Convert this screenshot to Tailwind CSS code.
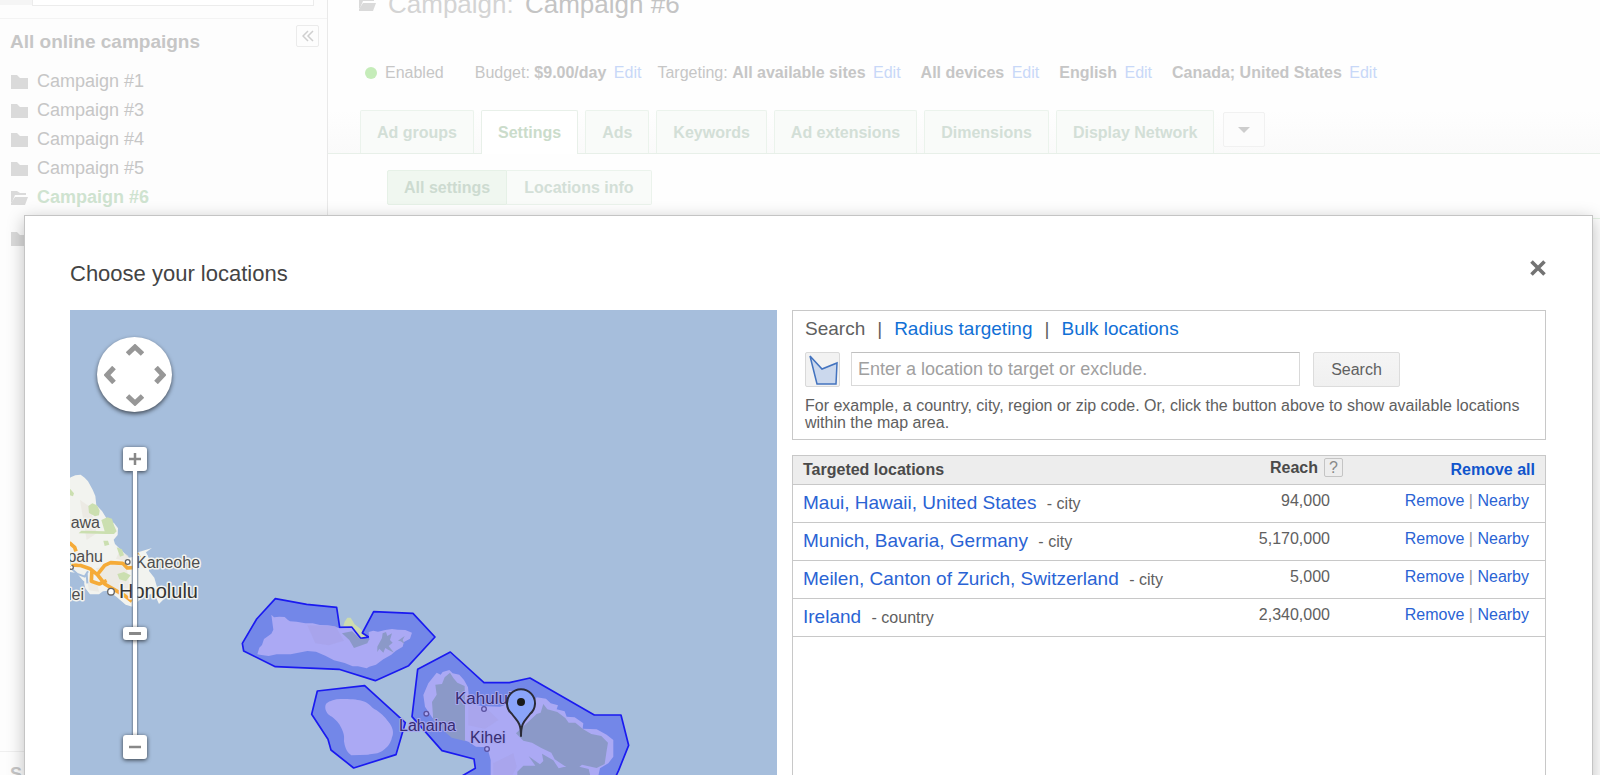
<!DOCTYPE html>
<html lang="en">
<head>
    <meta charset="UTF-8">
    <meta name="viewport" content="width=device-width, initial-scale=1.0">
    <title>Campaign #6</title>
    <script src="https://cdn.jsdelivr.net/npm/@tailwindcss/browser@4"></script>
</head>
<body class="relative h-screen overflow-hidden bg-white font-['Liberation_Sans',Arial,sans-serif] text-base leading-5 text-[#c6c6c6]">

    <!-- icons -->
    <svg class="hidden">
        <symbol id="folder" viewBox="0 0 17 14"><path fill="#dadada" d="M0 0h6l3 3h8v11H0z"/></symbol>
        <symbol id="folder-open" viewBox="0 0 17 14"><path fill="#dadada" d="M0 0h6l3 2h6v2H4L1 11H0z"/><path fill="#dadada" d="M4 6h13l-3 8H0v-2z"/></symbol>
    </svg>

    <div class="flex min-h-full">
        <aside class="flex h-screen w-[328px] shrink-0 flex-col border-r border-[#e9e9e9] bg-[#fdfdfd]">
            <div class="flex h-[19px] items-start border-b border-[#f3f3f3]">
                <div class="h-[5px] w-8 bg-[#f5f5f5]"></div>
                <div class="h-[6px] w-[282px] border border-t-0 border-[#ececec] bg-white"></div>
            </div>
            <div class="flex items-start justify-between pt-[6px] pr-2 pl-[10px]">
                <h2 class="pt-[7px] text-[19px] font-bold">All online campaigns</h2>
                <button class="flex h-[22px] w-[23px] items-center justify-center rounded-xs border border-[#ebebeb]" aria-label="Collapse">
                    <svg class="h-3 w-3" viewBox="0 0 12 12" fill="none" stroke="#cfcfcf" stroke-width="1.5"><path d="M6 1L1 6l5 5M11 1L6 6l5 5"/></svg>
                </button>
            </div>
            <ul class="mt-[15px] pl-[11px] text-lg/[29px]">
                <li><a href="#" class="flex items-center gap-[9px]"><svg class="h-[14px] w-[17px]"><use href="#folder"/></svg>Campaign #1</a></li>
                <li><a href="#" class="flex items-center gap-[9px]"><svg class="h-[14px] w-[17px]"><use href="#folder"/></svg>Campaign #3</a></li>
                <li><a href="#" class="flex items-center gap-[9px]"><svg class="h-[14px] w-[17px]"><use href="#folder"/></svg>Campaign #4</a></li>
                <li><a href="#" class="flex items-center gap-[9px]"><svg class="h-[14px] w-[17px]"><use href="#folder"/></svg>Campaign #5</a></li>
                <li><a href="#" class="flex items-center gap-[9px] font-bold text-[#cfe3d0]"><svg class="h-[14px] w-[17px]"><use href="#folder-open"/></svg>Campaign #6</a></li>
                <li class="mt-5"><svg class="h-[14px] w-[17px]"><use href="#folder"/></svg></li>
            </ul>
            <div class="mt-auto h-6 border-t border-[#efefef] pt-3 pl-[10px] text-lg/5 font-bold">S</div>
        </aside>

        <main class="flex min-w-0 grow flex-col bg-[#fefefe]">
            <h1 class="flex h-[19px] items-end gap-3 pl-[31px] text-[26px] leading-[30px] text-[#d4d4d4]">
                <svg class="mb-2 h-[14px] w-[17px] shrink-0"><use href="#folder-open"/></svg>
                <span class="whitespace-nowrap">Campaign: <span class="ml-1 text-[#c4c4c4]">Campaign #6</span></span>
            </h1>
            <div class="mt-11 flex items-center gap-5 pl-[37px] whitespace-nowrap">
                <span class="mr-[11px] flex items-center gap-2"><span class="h-3 w-3 rounded-full bg-[#c5ecb9]"></span>Enabled</span>
                <span class="-mr-1">Budget: <b>$9.00/day</b> <a href="#" class="ml-[3px] text-[#c8d8f8]">Edit</a></span>
                <span>Targeting: <b>All available sites</b> <a href="#" class="ml-[3px] text-[#c8d8f8]">Edit</a></span>
                <span><b>All devices</b> <a href="#" class="ml-[3px] text-[#c8d8f8]">Edit</a></span>
                <span><b>English</b> <a href="#" class="ml-[3px] text-[#c8d8f8]">Edit</a></span>
                <span><b>Canada; United States</b> <a href="#" class="ml-[3px] text-[#c8d8f8]">Edit</a></span>
            </div>
            <nav class="mt-[27px] flex items-end gap-[7px] border-b border-[#e8f0e9] bg-linear-to-b from-[#fefefe] to-[#fafafa] pl-8 font-bold whitespace-nowrap text-[#d3dfd7]">
                <a href="#" class="h-[43px] rounded-t-xs border border-b-0 border-[#ebf3ec] bg-[#f9fbf9] px-4 pt-3">Ad groups</a>
                <a href="#" class="-mb-px h-11 rounded-t-xs border border-b-0 border-[#e8f0e9] bg-white px-4 pt-3 text-[#cbdccb]">Settings</a>
                <a href="#" class="h-[43px] rounded-t-xs border border-b-0 border-[#ebf3ec] bg-[#f9fbf9] px-4 pt-3">Ads</a>
                <a href="#" class="h-[43px] rounded-t-xs border border-b-0 border-[#ebf3ec] bg-[#f9fbf9] px-4 pt-3">Keywords</a>
                <a href="#" class="h-[43px] rounded-t-xs border border-b-0 border-[#ebf3ec] bg-[#f9fbf9] px-4 pt-3">Ad extensions</a>
                <a href="#" class="h-[43px] rounded-t-xs border border-b-0 border-[#ebf3ec] bg-[#f9fbf9] px-4 pt-3">Dimensions</a>
                <a href="#" class="h-[43px] rounded-t-xs border border-b-0 border-[#ebf3ec] bg-[#f9fbf9] px-4 pt-3">Display Network</a>
                <button class="mb-[6px] ml-[2px] flex h-[35px] w-[42px] items-center justify-center rounded-xs border border-[#f1f1f1] bg-[#fcfcfc]" aria-label="More tabs">
                    <svg class="h-[6px] w-3" viewBox="0 0 12 6"><path fill="#cdcdcd" d="M0 0h12L6 6z"/></svg>
                </button>
            </nav>
            <div class="flex border-b border-[#e6f3e6] pt-4 pb-[13px] pl-[59px] font-bold text-[#d3dfd7]">
                <a href="#" class="h-[35px] rounded-l-xs border border-[#e6f1e7] bg-[#f0f7f0] px-4 pt-[7px] text-[#cddbd0]">All settings</a>
                <a href="#" class="h-[35px] rounded-r-xs border border-l-0 border-[#ebf3ec] bg-[#f9fbf9] px-[17px] pt-[7px]">Locations info</a>
            </div>
        </main>
    </div>

    <!-- location picker -->
    <div role="dialog" aria-labelledby="dialog-title" class="absolute top-[215px] right-[7px] left-6 border border-[#c4c4c4] bg-white pt-11 pr-[46px] pb-11 pl-[45px] text-[#606060] shadow-[0_4px_16px_rgba(0,0,0,0.25)]">
        <div class="mb-[22px] flex items-start justify-between">
            <h2 id="dialog-title" class="text-[22px]/[28px] text-[#444]">Choose your locations</h2>
            <button class="p-0" aria-label="Close">
                <svg class="h-4 w-4" viewBox="0 0 16 16" stroke="#737373" stroke-width="3.6"><path d="M1.500 1.500l13 13M14.500 1.500l-13 13"/></svg>
            </button>
        </div>

        <div class="flex gap-[15px]">
            <div class="relative flex-[707] overflow-hidden bg-[#a6bedc]">
                <svg class="block w-full" viewBox="70 310 707 600" font-size="16">
                    <!-- Oahu -->
                    <g transform="translate(60 430) scale(.3333)">
                        <path fill="#f2f3ef" d="M20 150l14-9 12-5 16-2 12 9 10 11 14 25 8 19 3 28 17 17 16 26 20 10 12 16-1 20-12 14 4 13 19 19 23 22 12-2 10-13 20-6 27-8-18 13 9 18 0 38 16 20 10 35 19 4 3 22-18 18-7-16-15-14-18 4-14 10-26 24-20-6-28-24-26-18-14 2-12 9-27 0-14-18-6-22-20-24-29-4z"/>
                        <path fill="#e8e4dc" d="M108 415l60-12 32 10 10 60-10 30-30-10-42-40zM82 455l30 8 5 22-30-4zM180 360l26 18-8 16-30-8zM60 210l30 20 20 80-30 20z" opacity=".6"/>
                        <path fill="#cbdfb0" d="M85 228l12-8 14 6 8 16-2 14-12 3-18-10zM124 270l18-8 14 4 6 20 8 18-8 8h-24l-82-2 8-8 70 2zM30 176l12 14-3 9-9-3zM170 352l16 6 6 18-12 4zM172 432l20-6 20 10-14 18-20-6zM130 332l14 0 4 12-14 4z"/>
                        <path fill="none" stroke="#a6bedc" stroke-width="6" d="M28 410l24 22 22 8 10-16M40 438l30 18-2 26M80 430l2 30"/>
                        <path fill="none" stroke="#f5ab38" stroke-width="11" stroke-linejoin="round" d="M28 338l16 14 4 12M28 405l32 1 30 10 22 18 22-28 18-8 36 2 14 14 26-2M96 418l-2 36 24 8 22-10M112 434l22 28 34 20 22 12 26 20M230 370l8 14"/>
                        <g fill="#fff" stroke="#666" stroke-width="4"><circle cx="203" cy="396" r="7"/><circle cx="153" cy="485" r="10"/><circle cx="34" cy="412" r="6"/></g>
                    </g>
                    <g fill="#4d4d4d" stroke="#f2f3ef" stroke-width="3" paint-order="stroke" stroke-linejoin="round">
                        <text x="100" y="528" text-anchor="end">Wahiawa</text>
                        <text x="103" y="562" text-anchor="end">Waipahu</text>
                        <text x="84" y="600" text-anchor="end">Kapolei</text>
                        <text x="136" y="568">Kaneohe</text>
                        <text x="119" y="598" font-size="20" fill="#333">Honolulu</text>
                    </g>

                    <!-- Molokai and Lanai -->
                    <g transform="translate(230 580) scale(.3333)">
                        <path fill="#cddcae" d="M344 125l8-12h10l12 20 18 14 20 26-26 3-24-32-22-6z"/>
                        <g fill="#7387e8" stroke="#1a1af0" stroke-width="5" stroke-linejoin="round">
                            <path d="M136 56l94 17 90 9 9 60 36-1 27 34 24-4-19-12 34-64 118 5 66 71-79 86-100 45-109-34-191-8-95-47-4-23 43-73z"/>
                            <path d="M262 333l142-16 122 111-28 96-127 40-68-54-9-32-49-75z"/>
                        </g>
                        <path fill="#aba9f4" d="M124 104l8 8 16-2 16 1 10 9 6 4 20 1 26 5 22 0 22 5 24 1 18 3 16 6 36-1 26 34 28 2-2-24 14-4 14 3 22-5 20-3 18 2 22 1 20 8-6 18-18 10-4 14-20 12-14 12-24 14-22 16-20 6-8 5-26-6-16 0-24-10-32-8-26-14-28-12-26-2-50 10-42 0-24 5-22-3-12-2 6-20 8-8 6-18 22-16 6-12z"/>
                        <path fill="#aba9f4" d="M286 378c2-12 18-16 34-20 32-2 64 0 80 6 18 6 22 16 34 24 16 8 32 24 40 36 16 18 18 36 12 48-4 20-16 32-28 40-14 10-28 8-44 12l-50 2c-16-10-20-30-22-42 2-18-2-28-8-40-6-16-18-26-28-34-12-4-22-18-20-32z"/>
                        <path fill="#8b99c8" d="M336 160l30-6 24 22 28 2-6 12-40 14-14-24zM442 200l14-26 2-14 10-4 4 12 14-8-6 20 8 8-12 10 16 20-20-10-6-4-6 14-12-12-6 10zM504 182l20-14-6 12 6 12-12-8z"/>
                        <path fill="#a7a2e6" d="M232 136l84 2 26 44-46 14-40-6z" opacity=".6"/>
                    </g>
                    <!-- Maui -->
                    <g transform="translate(400 640) scale(.3333)">
                        <path fill="#7387e8" stroke="#1a1af0" stroke-width="5" stroke-linejoin="round" d="M53 88l98-52 101 92h76l62-14 193 111h80l23 91-30 75-60 130H230L130 440l96-55-4-28-96-25-90-102z"/>
                        <path fill="#aba9f4" d="M110 98l12 6 6-8 20-6 10 10 20 4 14 16 12 22 2 20 8 30 30 6 56 2 40-14 60 0 10-14 28 4 14 14 22 6-4 12 24 6 6 16 24 2 26 18-2 16 42 2 30 16 20 16v50l-15 20-25 15-20 90H272V360l-10-38-34-2-23-15-55-20-30-23-25-32-20-30-5-35 15-35z"/>
                        <path fill="#8b99c8" d="M150 98l10 16 12 14 22 10 1 50v115l-40-10-30-26-25-25-4-56 14-22-4-30 20-2 8-20zM410 222l12-4 8-26 12 16 30 8 24 18 10 14 20 0 24 20 24 14 30 6 20 20-4 24-6 40-24 12-44-10-16 14-30-6-36-24-10-20-30-14-28-16-26-6-22-22zM352 395l18-18 36 0-20-28 34 24 10-10-4-22 34 20 16 24 40-10 50 12 10 40H352z"/>
                        <path fill="#a7a2e6" d="M205 190l60 20 30 30-40 26-50-10zM280 370l60-30 10 40-20 40h-50z" opacity=".5"/>
                        <g fill="#aba9f4" stroke="#5a51a0" stroke-width="4"><circle cx="79" cy="221" r="7"/><circle cx="252" cy="207" r="7"/><circle cx="261" cy="327" r="7"/></g>
                    </g>
                    <g fill="#362c72" stroke="#a7a7ee" stroke-width="2" paint-order="stroke" stroke-linejoin="round">
                        <text x="455" y="704" font-size="17">Kahului</text>
                        <text x="399" y="731">Lahaina</text>
                        <text x="470" y="743">Kihei</text>
                    </g>
                    <path fill="#8aa4fa" stroke="#2b2b38" stroke-width="2" stroke-linejoin="round" d="M521 736c0-14-4-15-9-22a14 14 0 1 1 18 0c-5 7-9 8-9 22z"/>
                    <circle cx="521" cy="702" r="4" fill="#1a1a1a"/>
                </svg>

                <!-- map controls -->
                <div class="absolute top-[27px] left-[27px] grid h-[75px] w-[75px] grid-cols-3 grid-rows-3 place-items-center rounded-full bg-white shadow-[0_2px_4px_rgba(0,0,0,0.6)]">
                    <button class="col-start-2" aria-label="Pan up"><svg class="h-3 w-[18px]" viewBox="0 0 18 12" fill="none" stroke="#979797" stroke-width="5"><path d="M1.500 10L9 3l7.500 7"/></svg></button>
                    <button class="col-start-1 row-start-2" aria-label="Pan left"><svg class="h-[18px] w-3" viewBox="0 0 12 18" fill="none" stroke="#979797" stroke-width="5"><path d="M10 1.500L3 9l7 7.500"/></svg></button>
                    <button class="col-start-3 row-start-2" aria-label="Pan right"><svg class="h-[18px] w-3" viewBox="0 0 12 18" fill="none" stroke="#979797" stroke-width="5"><path d="M2 1.500L9 9l-7 7.500"/></svg></button>
                    <button class="col-start-2 row-start-3" aria-label="Pan down"><svg class="h-3 w-[18px]" viewBox="0 0 18 12" fill="none" stroke="#979797" stroke-width="5"><path d="M1.500 2L9 9l7.500-7"/></svg></button>
                </div>
                <div class="absolute top-[137px] left-[53px] flex w-6 flex-col">
                    <button class="flex h-6 items-center justify-center rounded-[3px] bg-white shadow-[0_1px_4px_rgba(0,0,0,0.7)]" aria-label="Zoom in">
                        <svg class="h-3 w-3" viewBox="0 0 12 12" stroke="#888" stroke-width="2.500"><path d="M0 6h12M6 0v12"/></svg>
                    </button>
                    <input type="range" value="62" aria-label="Zoom" class="m-0 h-[264px] w-6 appearance-none bg-[linear-gradient(90deg,transparent_8px,#76879c_10px,#fff_10px,#fff_14px,#76879c_14px,transparent_16px)] [writing-mode:vertical-lr] [&::-webkit-slider-thumb]:h-[13px] [&::-webkit-slider-thumb]:w-6 [&::-webkit-slider-thumb]:appearance-none [&::-webkit-slider-thumb]:rounded-[3px] [&::-webkit-slider-thumb]:bg-white [&::-webkit-slider-thumb]:bg-[linear-gradient(#888,#888)] [&::-webkit-slider-thumb]:bg-[length:12px_3px] [&::-webkit-slider-thumb]:bg-center [&::-webkit-slider-thumb]:bg-no-repeat [&::-webkit-slider-thumb]:shadow-[0_1px_4px_rgba(0,0,0,0.7)]">
                    <button class="flex h-6 items-center justify-center rounded-[3px] bg-white shadow-[0_1px_4px_rgba(0,0,0,0.7)]" aria-label="Zoom out">
                        <svg class="h-3 w-3" viewBox="0 0 12 12" stroke="#888" stroke-width="2.500"><path d="M0 6h12"/></svg>
                    </button>
                </div>
            </div>

            <div class="flex flex-[754] flex-col gap-[15px]">
                <form class="border border-[#c8c8c8] px-3 pt-[7px] pb-2">
                    <div class="flex gap-3 text-[19px]/[22px]">
                        <span>Search</span><span>|</span><a href="#" class="text-[#1170d6]">Radius targeting</a><span>|</span><a href="#" class="text-[#1170d6]">Bulk locations</a>
                    </div>
                    <div class="mt-3 flex items-start">
                        <button type="button" class="h-[35px] w-[35px] rounded-xs border border-[#d9d9d9] bg-[#f2f2f2]" aria-label="Show locations within map area">
                            <svg class="h-[33px] w-[33px]" viewBox="0 0 33 33" fill="#cbd8ed" stroke="#4373bf" stroke-width="1.500"><path d="M4 3l12 13 15-6-1 21H11z"/></svg>
                        </button>
                        <input type="text" aria-label="Location" placeholder="Enter a location to target or exclude." class="ml-[11px] h-[34px] w-[449px] border border-[#d9d9d9] border-t-[#c0c0c0] px-[6px] text-lg placeholder:text-[#a0a0a0]">
                        <button type="submit" class="ml-[13px] h-[35px] w-[87px] rounded-xs border border-[#dcdcdc] bg-linear-to-b from-[#f5f5f5] to-[#f0f0f0]">Search</button>
                    </div>
                    <p class="mt-[10px] leading-[17px]">For example, a country, city, region or zip code. Or, click the button above to show available locations within the map area.</p>
                </form>

                <div class="grow border border-[#c8c8c8]">
                    <table class="w-full border-collapse">
                        <thead>
                            <tr class="h-7 border-b border-[#c8c8c8] bg-[#ededed]">
                                <th class="pl-[10px] text-left text-[#4a4a4a]">Targeted locations</th>
                                <th class="w-[150px] pb-1 text-right text-[#4a4a4a]"><span class="flex items-center justify-end gap-[6px]">Reach <button class="h-[19px] w-[19px] rounded-xs border border-[#c4c4c4] leading-4 font-normal text-[#888]" aria-label="About reach">?</button></span></th>
                                <th class="w-[202px] pr-[10px] text-right"><a href="#" class="text-[#1155cc]">Remove all</a></th>
                            </tr>
                        </thead>
                        <tbody>
                            <tr class="h-[38px] border-b border-[#c8c8c8]">
                                <td class="pl-[10px]"><a href="#" class="mr-[6px] text-[19px] text-[#2a63d4]">Maui, Hawaii, United States</a> - city</td>
                                <td class="pr-[13px] pb-1 text-right">94,000</td>
                                <td class="pr-4 pb-1 text-right text-[#999]"><a href="#" class="text-[#2a63d4]">Remove</a> | <a href="#" class="text-[#2a63d4]">Nearby</a></td>
                            </tr>
                            <tr class="h-[38px] border-b border-[#c8c8c8]">
                                <td class="pl-[10px]"><a href="#" class="mr-[6px] text-[19px] text-[#2a63d4]">Munich, Bavaria, Germany</a> - city</td>
                                <td class="pr-[13px] pb-1 text-right">5,170,000</td>
                                <td class="pr-4 pb-1 text-right text-[#999]"><a href="#" class="text-[#2a63d4]">Remove</a> | <a href="#" class="text-[#2a63d4]">Nearby</a></td>
                            </tr>
                            <tr class="h-[38px] border-b border-[#c8c8c8]">
                                <td class="pl-[10px]"><a href="#" class="mr-[6px] text-[19px] text-[#2a63d4]">Meilen, Canton of Zurich, Switzerland</a> - city</td>
                                <td class="pr-[13px] pb-1 text-right">5,000</td>
                                <td class="pr-4 pb-1 text-right text-[#999]"><a href="#" class="text-[#2a63d4]">Remove</a> | <a href="#" class="text-[#2a63d4]">Nearby</a></td>
                            </tr>
                            <tr class="h-[38px] border-b border-[#c8c8c8]">
                                <td class="pl-[10px]"><a href="#" class="mr-[6px] text-[19px] text-[#2a63d4]">Ireland</a> - country</td>
                                <td class="pr-[13px] pb-1 text-right">2,340,000</td>
                                <td class="pr-4 pb-1 text-right text-[#999]"><a href="#" class="text-[#2a63d4]">Remove</a> | <a href="#" class="text-[#2a63d4]">Nearby</a></td>
                            </tr>
                        </tbody>
                    </table>
                </div>
            </div>
        </div>
    </div>
</body>
</html>
